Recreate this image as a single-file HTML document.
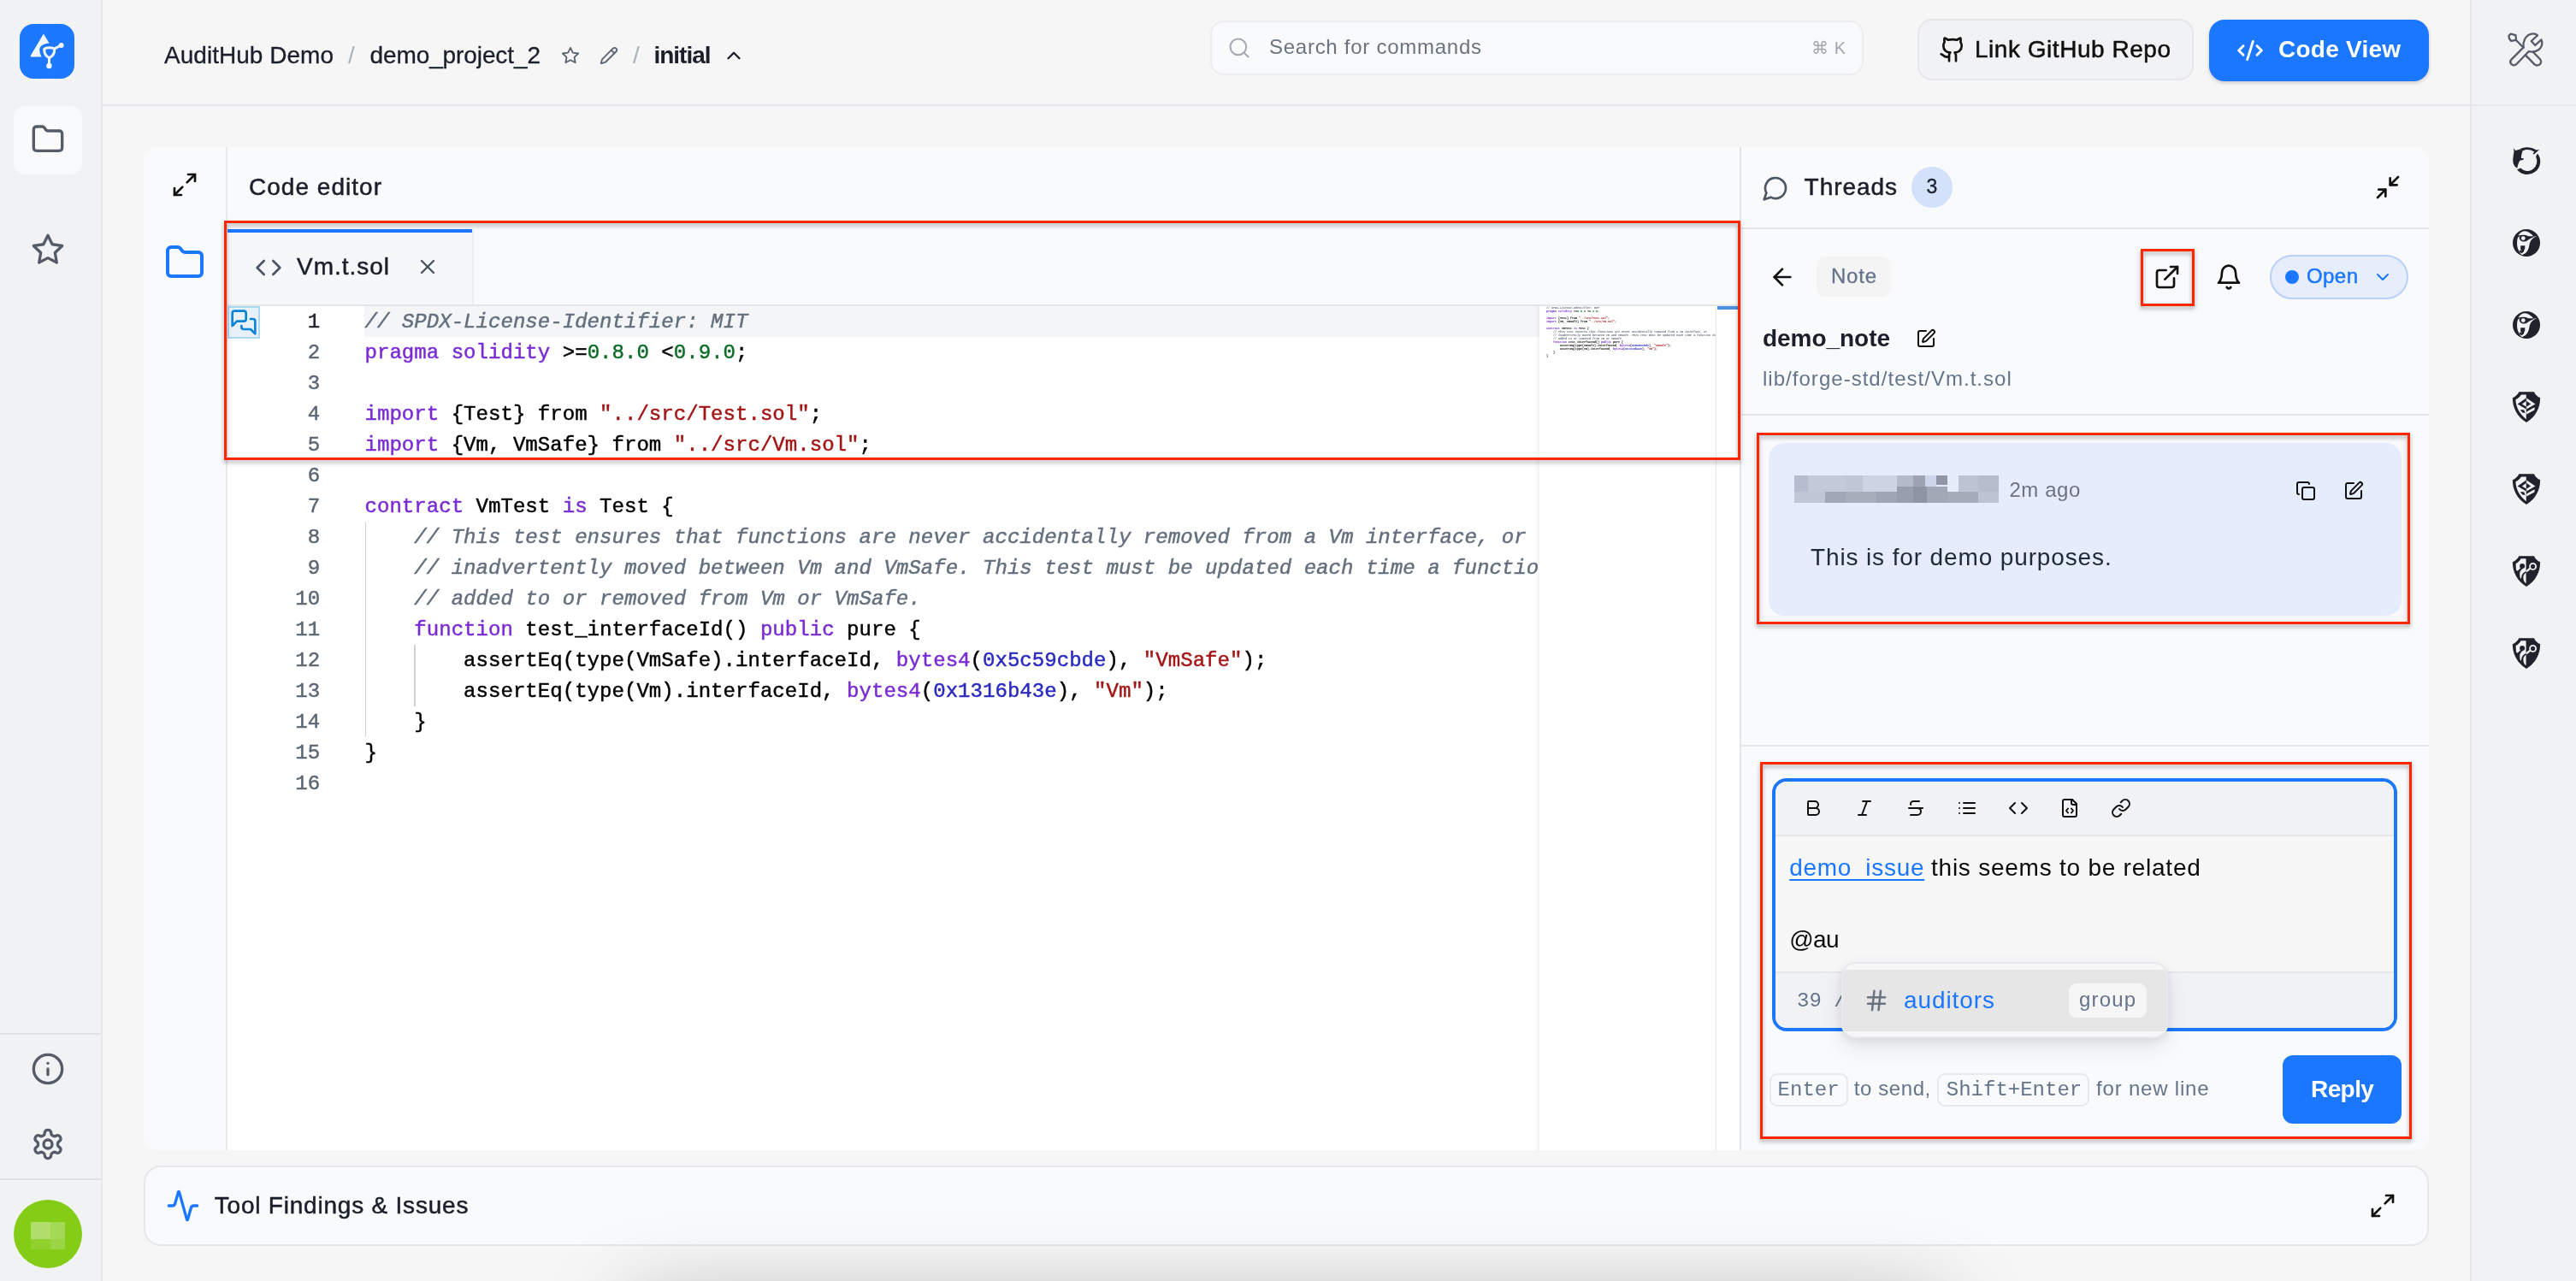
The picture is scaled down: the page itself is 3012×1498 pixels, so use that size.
<!DOCTYPE html><html><head><meta charset="utf-8"><title>AuditHub</title><style>html,body{margin:0;padding:0}body{width:3012px;height:1498px;position:relative;overflow:hidden;background:#f6f6f6;font-family:"Liberation Sans",sans-serif}svg{display:block;overflow:visible}</style></head><body><div style="position:absolute;left:0;top:0;width:3012px;height:1498px;overflow:hidden;will-change:transform"><div style="position:absolute;left:0px;top:0px;width:118px;height:1498px;background:#f1f2f4;"></div>
<div style="position:absolute;left:118px;top:0px;width:2px;height:1498px;background:#e6e7ec;"></div>
<div style="position:absolute;left:2890px;top:0px;width:122px;height:1498px;background:#f1f2f4;"></div>
<div style="position:absolute;left:2888px;top:0px;width:2px;height:1498px;background:#e6e7ec;"></div>
<div style="position:absolute;left:120px;top:122px;width:2892px;height:2px;background:#e6e7ec;"></div>
<div style="position:absolute;left:23px;top:28px;width:64px;height:64px;background:#1b78ff;border-radius:16px;"></div>
<svg style="position:absolute;left:20px;top:25px" width="70" height="70" viewBox="0 0 70 70"><path d="M30.9 14.6 L37.6 25.4 C31 25.6 26 29 26.2 33.5 C26.4 37 27.6 39.6 28.6 41.6 L16.4 41.6 Q15.2 41.2 15.8 40 Z" fill="#f1f5fd"/><path d="M31.6 32.6 C34 30.2 41.5 30.2 43.8 32.6 C43.6 37.5 41.5 41 37.6 42.6 C33.8 41 31.8 37.5 31.6 32.6 Z" fill="none" stroke="#f1f5fd" stroke-width="3" stroke-linejoin="round"/><path d="M44 31.8 L51.2 28 M37.5 43 L37.5 51.5" stroke="#f1f5fd" stroke-width="3" stroke-linecap="round"/><circle cx="51.6" cy="27.9" r="3" fill="#f1f5fd"/><circle cx="37.4" cy="52" r="3.2" fill="#f1f5fd"/></svg>
<div style="position:absolute;left:16px;top:124px;width:80px;height:80px;background:#f9fafb;border-radius:14px;"></div>
<svg style="position:absolute;left:36.00px;top:143.00px;" width="40" height="40" viewBox="0 0 24 24" fill="none" stroke="#555b67" stroke-width="2" stroke-linecap="round" stroke-linejoin="round"><path d="M20 20a2 2 0 0 0 2-2V8a2 2 0 0 0-2-2h-7.9a2 2 0 0 1-1.69-.9L9.6 3.9A2 2 0 0 0 7.93 3H4a2 2 0 0 0-2 2v13a2 2 0 0 0 2 2Z"/></svg>
<svg style="position:absolute;left:36.00px;top:271.50px;" width="40" height="40" viewBox="0 0 24 24" fill="none" stroke="#555b67" stroke-width="2" stroke-linecap="round" stroke-linejoin="round"><polygon points="12 2 15.09 8.26 22 9.27 17 14.14 18.18 21.02 12 17.77 5.82 21.02 7 14.14 2 9.27 8.91 8.26 12 2"/></svg>
<div style="position:absolute;left:0px;top:1208px;width:118px;height:2px;background:#dfe1e6;"></div>
<svg style="position:absolute;left:36.00px;top:1230.00px;" width="40" height="40" viewBox="0 0 24 24" fill="none" stroke="#555b67" stroke-width="2" stroke-linecap="round" stroke-linejoin="round"><circle cx="12" cy="12" r="10"/><path d="M12 16v-4"/><path d="M12 8h.01"/></svg>
<svg style="position:absolute;left:36.00px;top:1318.00px;" width="40" height="40" viewBox="0 0 24 24" fill="none" stroke="#555b67" stroke-width="2" stroke-linecap="round" stroke-linejoin="round"><path d="M12.22 2h-.44a2 2 0 0 0-2 2v.18a2 2 0 0 1-1 1.73l-.43.25a2 2 0 0 1-2 0l-.15-.08a2 2 0 0 0-2.73.73l-.22.38a2 2 0 0 0 .73 2.73l.15.1a2 2 0 0 1 1 1.72v.51a2 2 0 0 1-1 1.74l-.15.09a2 2 0 0 0-.73 2.73l.22.38a2 2 0 0 0 2.73.73l.15-.08a2 2 0 0 1 2 0l.43.25a2 2 0 0 1 1 1.73V20a2 2 0 0 0 2 2h.44a2 2 0 0 0 2-2v-.18a2 2 0 0 1 1-1.73l.43-.25a2 2 0 0 1 2 0l.15.08a2 2 0 0 0 2.73-.73l.22-.39a2 2 0 0 0-.73-2.73l-.15-.08a2 2 0 0 1-1-1.74v-.5a2 2 0 0 1 1-1.74l.15-.09a2 2 0 0 0 .73-2.73l-.22-.38a2 2 0 0 0-2.73-.73l-.15.08a2 2 0 0 1-2 0l-.43-.25a2 2 0 0 1-1-1.73V4a2 2 0 0 0-2-2z"/><circle cx="12" cy="12" r="3"/></svg>
<div style="position:absolute;left:0px;top:1378px;width:118px;height:2px;background:#dfe1e6;"></div>
<div style="position:absolute;left:16px;top:1403px;width:80px;height:80px;background:#84cc16;border-radius:50%;"></div>
<div style="position:absolute;left:36px;top:1429px;width:23px;height:20px;background:#b0de6c;"></div>
<div style="position:absolute;left:59px;top:1429px;width:17px;height:20px;background:#a3d955;"></div>
<div style="position:absolute;left:36px;top:1449px;width:23px;height:12px;background:#8fd02c;"></div>
<div style="position:absolute;left:59px;top:1449px;width:17px;height:12px;background:#9bd545;"></div>
<span id="t1" style="position:absolute;left:192px;top:50.90px;font:400 28px/1 'Liberation Sans', sans-serif;color:#1a1f2b;white-space:pre;letter-spacing:0.029px;-webkit-text-stroke:0.3px #1a1f2b;">AuditHub Demo</span>
<span id="t2" style="position:absolute;left:407px;top:50.90px;font:400 28px/1 'Liberation Sans', sans-serif;color:#a9b1be;white-space:pre;letter-spacing:0.000px;">/</span>
<span id="t3" style="position:absolute;left:432.5px;top:50.90px;font:400 28px/1 'Liberation Sans', sans-serif;color:#1a1f2b;white-space:pre;letter-spacing:-0.101px;-webkit-text-stroke:0.3px #1a1f2b;">demo_project_2</span>
<svg style="position:absolute;left:656.00px;top:53.50px;" width="22" height="22" viewBox="0 0 24 24" fill="none" stroke="#5b6472" stroke-width="2" stroke-linecap="round" stroke-linejoin="round"><polygon points="12 2 15.09 8.26 22 9.27 17 14.14 18.18 21.02 12 17.77 5.82 21.02 7 14.14 2 9.27 8.91 8.26 12 2"/></svg>
<svg style="position:absolute;left:701.00px;top:53.50px;" width="22" height="22" viewBox="0 0 24 24" fill="none" stroke="#5b6472" stroke-width="2" stroke-linecap="round" stroke-linejoin="round"><path d="M21.174 6.812a1 1 0 0 0-3.986-3.987L3.842 16.174a2 2 0 0 0-.5.83l-1.321 4.352a.5.5 0 0 0 .623.622l4.353-1.32a2 2 0 0 0 .83-.497z"/><path d="m15 5 4 4"/></svg>
<span id="t4" style="position:absolute;left:740px;top:50.90px;font:400 28px/1 'Liberation Sans', sans-serif;color:#a9b1be;white-space:pre;letter-spacing:0.000px;">/</span>
<span id="t5" style="position:absolute;left:764.5px;top:50.90px;font:700 28px/1 'Liberation Sans', sans-serif;color:#1a1f2b;white-space:pre;letter-spacing:-1.021px;">initial</span>
<svg style="position:absolute;left:844.70px;top:52.30px;" width="26" height="26" viewBox="0 0 24 24" fill="none" stroke="#1a1f2b" stroke-width="2.2" stroke-linecap="round" stroke-linejoin="round"><path d="m18 15-6-6-6 6"/></svg>
<div style="position:absolute;left:1415px;top:24px;width:764px;height:64px;box-sizing:border-box;background:#f9fafb;border:2px solid #ededf0;border-radius:16px;"></div>
<svg style="position:absolute;left:1434.60px;top:42.10px;" width="28" height="28" viewBox="0 0 24 24" fill="none" stroke="#a3a9b5" stroke-width="1.75" stroke-linecap="round" stroke-linejoin="round"><circle cx="11" cy="11" r="8"/><path d="m21 21-4.3-4.3"/></svg>
<span id="t6" style="position:absolute;left:1484px;top:43.48px;font:400 24px/1 'Liberation Sans', sans-serif;color:#6b7280;white-space:pre;letter-spacing:0.735px;">Search for commands</span>
<span id="t7" style="position:absolute;left:2118px;top:46.07px;font:400 20px/1 'Liberation Sans', sans-serif;color:#a0a6b1;white-space:pre;letter-spacing:0.547px;">⌘ K</span>
<div style="position:absolute;left:2242px;top:22px;width:323px;height:72px;box-sizing:border-box;background:#f1f2f4;border:2px solid #e6e7ea;border-radius:17px;"></div>
<svg style="position:absolute;left:2266.50px;top:42.00px;" width="32" height="32" viewBox="0 0 24 24" fill="none" stroke="#111" stroke-width="2" stroke-linecap="round" stroke-linejoin="round"><path d="M15 22v-4a4.8 4.8 0 0 0-1-3.5c3 0 6-2 6-5.5.08-1.25-.27-2.48-1-3.5.28-1.15.28-2.35 0-3.5 0 0-1 0-3 1.5-2.64-.5-5.36-.5-8 0C6 2 5 2 5 2c-.3 1.15-.3 2.35 0 3.5A5.403 5.403 0 0 0 4 9c0 3.5 3 5.5 6 5.5-.39.49-.68 1.05-.85 1.65-.17.6-.22 1.23-.15 1.85v4"/><path d="M9 18c-4.51 2-5-2-7-2"/></svg>
<span id="t8" style="position:absolute;left:2309px;top:44.10px;font:400 28px/1 'Liberation Sans', sans-serif;color:#111;white-space:pre;letter-spacing:0.532px;-webkit-text-stroke:0.5px #111;">Link GitHub Repo</span>
<div style="position:absolute;left:2583px;top:22.5px;width:257px;height:72px;background:#1b77ff;border-radius:18px;box-shadow:0 2px 4px rgba(0,0,0,.18);"></div>
<svg style="position:absolute;left:2615.00px;top:42.50px;" width="32" height="32" viewBox="0 0 24 24" fill="none" stroke="#fff" stroke-width="2.2" stroke-linecap="round" stroke-linejoin="round"><path d="m18 16 4-4-4-4"/><path d="m6 8-4 4 4 4"/><path d="m14.5 4-5 16"/></svg>
<span id="t9" style="position:absolute;left:2664px;top:44.10px;font:700 28px/1 'Liberation Sans', sans-serif;color:#fff;white-space:pre;letter-spacing:0.238px;">Code View</span>
<svg style="position:absolute;left:2920px;top:25px" width="70" height="70" viewBox="0 0 70 70" fill="none" stroke="#555b67" stroke-width="2.3" stroke-linecap="round" stroke-linejoin="round"><path d="M15.6 14.6 L21.4 16.2 L22 21.8 L16 22.8 L14 20.2 L13.4 17 Z"/><path d="M22 22 L30.6 30.6"/><path d="M30.6 30.4 C29.6 24 32.6 16.8 39 14.8 C42 14 45.2 14.6 47 16.4 L39.8 23 L44.3 28 L51.4 21.4 C53.4 25 52.4 30 48.6 33 C45.4 35.4 40.5 36 36.6 35.2 L22.2 50.2 C20.4 51.8 17.6 51.6 16.2 49.8 C14.8 48.2 15 46 16.4 44.6 Z"/><path d="M32.9 39.4 L43.6 50.4 C45.4 52 48.4 51.8 50 50 C51.6 48.2 51.4 45.6 49.8 44 L42.4 36.4"/></svg>
<div style="position:absolute;left:168px;top:172px;width:2672px;height:1173px;background:#f9fafb;border-radius:16px;"></div>
<div style="position:absolute;left:266px;top:358px;width:1768px;height:987px;background:#fff;"></div>
<div style="position:absolute;left:264px;top:172px;width:2px;height:1173px;background:#e8e9ed;"></div>
<div style="position:absolute;left:2034px;top:172px;width:2px;height:1173px;background:#e3e5e9;"></div>
<svg style="position:absolute;left:200.00px;top:200.00px;" width="32" height="32" viewBox="0 0 24 24" fill="none" stroke="#111" stroke-width="2" stroke-linecap="round" stroke-linejoin="round"><polyline points="15 3 21 3 21 9"/><polyline points="9 21 3 21 3 15"/><line x1="21" x2="14" y1="3" y2="10"/><line x1="3" x2="10" y1="21" y2="14"/></svg>
<span id="t10" style="position:absolute;left:291px;top:204.90px;font:400 28px/1 'Liberation Sans', sans-serif;color:#1a1f2b;white-space:pre;letter-spacing:1.023px;-webkit-text-stroke:0.5px #1a1f2b;">Code editor</span>
<svg style="position:absolute;left:192.00px;top:283.00px;" width="48" height="48" viewBox="0 0 24 24" fill="none" stroke="#1b77ff" stroke-width="2" stroke-linecap="round" stroke-linejoin="round"><path d="M20 20a2 2 0 0 0 2-2V8a2 2 0 0 0-2-2h-7.9a2 2 0 0 1-1.69-.9L9.6 3.9A2 2 0 0 0 7.93 3H4a2 2 0 0 0-2 2v13a2 2 0 0 0 2 2Z"/></svg>
<div style="position:absolute;left:266px;top:268px;width:286px;height:89px;background:#f6f7f8;"></div>
<div style="position:absolute;left:552px;top:268px;width:1.5px;height:89px;background:#eceef0;"></div>
<div style="position:absolute;left:266px;top:268px;width:286px;height:4px;background:#1b77ff;"></div>
<div style="position:absolute;left:266px;top:356px;width:1768px;height:2px;background:#e4e6ea;"></div>
<svg style="position:absolute;left:297.70px;top:296.50px;" width="32" height="32" viewBox="0 0 24 24" fill="none" stroke="#4b5563" stroke-width="2" stroke-linecap="round" stroke-linejoin="round"><polyline points="16 18 22 12 16 6"/><polyline points="8 6 2 12 8 18"/></svg>
<span id="t11" style="position:absolute;left:347px;top:298.00px;font:400 28px/1 'Liberation Sans', sans-serif;color:#1a1f2b;white-space:pre;letter-spacing:0.980px;-webkit-text-stroke:0.5px #1a1f2b;">Vm.t.sol</span>
<svg style="position:absolute;left:486.00px;top:298.00px;" width="28" height="28" viewBox="0 0 24 24" fill="none" stroke="#4b5563" stroke-width="2" stroke-linecap="round" stroke-linejoin="round"><path d="M18 6 6 18"/><path d="m6 6 12 12"/></svg>
<div style="position:absolute;left:426px;top:358px;width:1374px;height:36px;background:#f4f5f7;"></div>
<div style="position:absolute;left:266px;top:358px;width:38px;height:38px;box-sizing:border-box;background:#e8f0fa;border:2px solid #a9d9f2;"></div>
<svg style="position:absolute;left:268.50px;top:360.50px;" width="32" height="32" viewBox="0 0 24 24" fill="none" stroke="#0a84d6" stroke-width="2" stroke-linecap="round" stroke-linejoin="round"><path d="M14 9a2 2 0 0 1-2 2H6l-4 4V4a2 2 0 0 1 2-2h8a2 2 0 0 1 2 2z"/><path d="M18 9h2a2 2 0 0 1 2 2v11l-4-4h-6a2 2 0 0 1-2-2v-1"/></svg>
<div style="position:absolute;left:266px;top:358px;width:1534px;height:987px;overflow:hidden;font:400 24.08px/1 'Liberation Mono', monospace;white-space:pre;-webkit-text-stroke:0.45px;"><div style="position:absolute;left:160.5px;top:252px;width:1.5px;height:252px;background:#d3d3d3"></div><div style="position:absolute;left:218.3px;top:396px;width:1.5px;height:72px;background:#d3d3d3"></div><div style="position:absolute;right:1425.8px;top:7.24px;color:#1f2329;">1</div><div style="position:absolute;left:160.5px;top:7.24px;color:#000;"><span style="color:#646f7e;font-style:italic">// SPDX-License-Identifier: MIT</span></div><div style="position:absolute;right:1425.8px;top:43.24px;color:#5c6773;">2</div><div style="position:absolute;left:160.5px;top:43.24px;color:#000;"><span style="color:#7a2bd4">pragma</span> <span style="color:#7a2bd4">solidity</span> &gt;=<span style="color:#0d6c26">0.8.0</span> &lt;<span style="color:#0d6c26">0.9.0</span>;</div><div style="position:absolute;right:1425.8px;top:79.24px;color:#5c6773;">3</div><div style="position:absolute;left:160.5px;top:79.24px;color:#000;"></div><div style="position:absolute;right:1425.8px;top:115.24px;color:#5c6773;">4</div><div style="position:absolute;left:160.5px;top:115.24px;color:#000;"><span style="color:#7a2bd4">import</span> {Test} from <span style="color:#a31515">&quot;../src/Test.sol&quot;</span>;</div><div style="position:absolute;right:1425.8px;top:151.24px;color:#5c6773;">5</div><div style="position:absolute;left:160.5px;top:151.24px;color:#000;"><span style="color:#7a2bd4">import</span> {Vm, VmSafe} from <span style="color:#a31515">&quot;../src/Vm.sol&quot;</span>;</div><div style="position:absolute;right:1425.8px;top:187.24px;color:#5c6773;">6</div><div style="position:absolute;left:160.5px;top:187.24px;color:#000;"></div><div style="position:absolute;right:1425.8px;top:223.24px;color:#5c6773;">7</div><div style="position:absolute;left:160.5px;top:223.24px;color:#000;"><span style="color:#7a2bd4">contract</span> VmTest <span style="color:#7a2bd4">is</span> Test {</div><div style="position:absolute;right:1425.8px;top:259.24px;color:#5c6773;">8</div><div style="position:absolute;left:160.5px;top:259.24px;color:#000;">    <span style="color:#646f7e;font-style:italic">// This test ensures that functions are never accidentally removed from a Vm interface, or</span></div><div style="position:absolute;right:1425.8px;top:295.24px;color:#5c6773;">9</div><div style="position:absolute;left:160.5px;top:295.24px;color:#000;">    <span style="color:#646f7e;font-style:italic">// inadvertently moved between Vm and VmSafe. This test must be updated each time a function is</span></div><div style="position:absolute;right:1425.8px;top:331.24px;color:#5c6773;">10</div><div style="position:absolute;left:160.5px;top:331.24px;color:#000;">    <span style="color:#646f7e;font-style:italic">// added to or removed from Vm or VmSafe.</span></div><div style="position:absolute;right:1425.8px;top:367.24px;color:#5c6773;">11</div><div style="position:absolute;left:160.5px;top:367.24px;color:#000;">    <span style="color:#7a2bd4">function</span> test_interfaceId() <span style="color:#7a2bd4">public</span> pure {</div><div style="position:absolute;right:1425.8px;top:403.24px;color:#5c6773;">12</div><div style="position:absolute;left:160.5px;top:403.24px;color:#000;">        assertEq(type(VmSafe).interfaceId, <span style="color:#7a2bd4">bytes4</span>(<span style="color:#2a2abf">0x5c59cbde</span>), <span style="color:#a31515">&quot;VmSafe&quot;</span>);</div><div style="position:absolute;right:1425.8px;top:439.24px;color:#5c6773;">13</div><div style="position:absolute;left:160.5px;top:439.24px;color:#000;">        assertEq(type(Vm).interfaceId, <span style="color:#7a2bd4">bytes4</span>(<span style="color:#2a2abf">0x1316b43e</span>), <span style="color:#a31515">&quot;Vm&quot;</span>);</div><div style="position:absolute;right:1425.8px;top:475.24px;color:#5c6773;">14</div><div style="position:absolute;left:160.5px;top:475.24px;color:#000;">    }</div><div style="position:absolute;right:1425.8px;top:511.24px;color:#5c6773;">15</div><div style="position:absolute;left:160.5px;top:511.24px;color:#000;">}</div><div style="position:absolute;right:1425.8px;top:547.24px;color:#5c6773;">16</div><div style="position:absolute;left:160.5px;top:547.24px;color:#000;"></div></div>
<div style="position:absolute;left:1794px;top:358px;width:6px;height:987px;background:linear-gradient(90deg,rgba(0,0,0,0),rgba(0,0,0,.045));"></div>
<div style="position:absolute;left:1808px;top:357.5px;width:198.5px;height:980px;overflow:hidden;"><div style="transform-origin:0 0;transform:scale(0.1384);width:1600px;font:700 24.08px/28.9px 'Liberation Mono', monospace;white-space:pre;"><div style="height:28.9px;line-height:28.9px;color:#000;"><span style="color:#646f7e;font-style:italic">// SPDX-License-Identifier: MIT</span></div><div style="height:28.9px;line-height:28.9px;color:#000;"><span style="color:#7a2bd4">pragma</span> <span style="color:#7a2bd4">solidity</span> &gt;=<span style="color:#0d6c26">0.8.0</span> &lt;<span style="color:#0d6c26">0.9.0</span>;</div><div style="height:28.9px;line-height:28.9px;color:#000;"> </div><div style="height:28.9px;line-height:28.9px;color:#000;"><span style="color:#7a2bd4">import</span> {Test} from <span style="color:#a31515">&quot;../src/Test.sol&quot;</span>;</div><div style="height:28.9px;line-height:28.9px;color:#000;"><span style="color:#7a2bd4">import</span> {Vm, VmSafe} from <span style="color:#a31515">&quot;../src/Vm.sol&quot;</span>;</div><div style="height:28.9px;line-height:28.9px;color:#000;"> </div><div style="height:28.9px;line-height:28.9px;color:#000;"><span style="color:#7a2bd4">contract</span> VmTest <span style="color:#7a2bd4">is</span> Test {</div><div style="height:28.9px;line-height:28.9px;color:#000;">    <span style="color:#646f7e;font-style:italic">// This test ensures that functions are never accidentally removed from a Vm interface, or</span></div><div style="height:28.9px;line-height:28.9px;color:#000;">    <span style="color:#646f7e;font-style:italic">// inadvertently moved between Vm and VmSafe. This test must be updated each time a function is</span></div><div style="height:28.9px;line-height:28.9px;color:#000;">    <span style="color:#646f7e;font-style:italic">// added to or removed from Vm or VmSafe.</span></div><div style="height:28.9px;line-height:28.9px;color:#000;">    <span style="color:#7a2bd4">function</span> test_interfaceId() <span style="color:#7a2bd4">public</span> pure {</div><div style="height:28.9px;line-height:28.9px;color:#000;">        assertEq(type(VmSafe).interfaceId, <span style="color:#7a2bd4">bytes4</span>(<span style="color:#2a2abf">0x5c59cbde</span>), <span style="color:#a31515">&quot;VmSafe&quot;</span>);</div><div style="height:28.9px;line-height:28.9px;color:#000;">        assertEq(type(Vm).interfaceId, <span style="color:#7a2bd4">bytes4</span>(<span style="color:#2a2abf">0x1316b43e</span>), <span style="color:#a31515">&quot;Vm&quot;</span>);</div><div style="height:28.9px;line-height:28.9px;color:#000;">    }</div><div style="height:28.9px;line-height:28.9px;color:#000;">}</div><div style="height:28.9px;line-height:28.9px;color:#000;"> </div></div></div>
<div style="position:absolute;left:2006.3px;top:358px;width:1px;height:987px;background:#e6e6e8;"></div>
<div style="position:absolute;left:2007.5px;top:358px;width:24.5px;height:4px;background:#4c8fe0;"></div>
<svg style="position:absolute;left:2059.50px;top:203.50px;" width="32" height="32" viewBox="0 0 24 24" fill="none" stroke="#4b5563" stroke-width="2" stroke-linecap="round" stroke-linejoin="round"><path d="M7.9 20A9 9 0 1 0 4 16.1L2 22Z"/></svg>
<span id="t12" style="position:absolute;left:2109.6px;top:205.30px;font:400 28px/1 'Liberation Sans', sans-serif;color:#1a1f2b;white-space:pre;letter-spacing:0.930px;-webkit-text-stroke:0.5px #1a1f2b;">Threads</span>
<div style="position:absolute;left:2235px;top:195px;width:48px;height:48px;background:#d3e1fb;border-radius:50%;"></div>
<span id="t13" style="position:absolute;left:2252.5px;top:206.73px;font:400 23px/1 'Liberation Sans', sans-serif;color:#1a1f2b;white-space:pre;letter-spacing:0.000px;-webkit-text-stroke:0.3px #1a1f2b;">3</span>
<svg style="position:absolute;left:2776.00px;top:203.00px;" width="32" height="32" viewBox="0 0 24 24" fill="none" stroke="#111" stroke-width="2" stroke-linecap="round" stroke-linejoin="round"><polyline points="4 14 10 14 10 20"/><polyline points="20 10 14 10 14 4"/><line x1="14" x2="21" y1="10" y2="3"/><line x1="3" x2="10" y1="21" y2="14"/></svg>
<div style="position:absolute;left:2036px;top:266px;width:804px;height:2px;background:#e6e7eb;"></div>
<svg style="position:absolute;left:2068.00px;top:308.00px;" width="32" height="32" viewBox="0 0 24 24" fill="none" stroke="#111" stroke-width="2" stroke-linecap="round" stroke-linejoin="round"><path d="m12 19-7-7 7-7"/><path d="M19 12H5"/></svg>
<div style="position:absolute;left:2124px;top:300px;width:87px;height:47px;background:#f4f4f5;border-radius:10px;"></div>
<span id="t14" style="position:absolute;left:2140.9px;top:311.08px;font:400 24px/1 'Liberation Sans', sans-serif;color:#64748b;white-space:pre;letter-spacing:0.799px;-webkit-text-stroke:0.3px #64748b;">Note</span>
<svg style="position:absolute;left:2518.00px;top:308.00px;" width="32" height="32" viewBox="0 0 24 24" fill="none" stroke="#111" stroke-width="2" stroke-linecap="round" stroke-linejoin="round"><path d="M15 3h6v6"/><path d="M10 14 21 3"/><path d="M18 13v6a2 2 0 0 1-2 2H5a2 2 0 0 1-2-2V8a2 2 0 0 1 2-2h6"/></svg>
<svg style="position:absolute;left:2590.00px;top:308.00px;" width="32" height="32" viewBox="0 0 24 24" fill="none" stroke="#111" stroke-width="2" stroke-linecap="round" stroke-linejoin="round"><path d="M6 8a6 6 0 0 1 12 0c0 7 3 9 3 9H3s3-2 3-9"/><path d="M10.3 21a1.94 1.94 0 0 0 3.4 0"/></svg>
<div style="position:absolute;left:2654px;top:298px;width:162px;height:52px;box-sizing:border-box;background:#e6eefc;border:2px solid #b9d0fb;border-radius:26px;"></div>
<div style="position:absolute;left:2672px;top:316px;width:16px;height:16px;background:#1b77ff;border-radius:50%;"></div>
<span id="t15" style="position:absolute;left:2697px;top:311.08px;font:400 24px/1 'Liberation Sans', sans-serif;color:#1b77ff;white-space:pre;letter-spacing:0.427px;-webkit-text-stroke:0.5px #1b77ff;">Open</span>
<svg style="position:absolute;left:2774.00px;top:312.00px;" width="24" height="24" viewBox="0 0 24 24" fill="none" stroke="#1b77ff" stroke-width="2" stroke-linecap="round" stroke-linejoin="round"><path d="m6 9 6 6 6-6"/></svg>
<span id="t16" style="position:absolute;left:2061px;top:381.80px;font:700 28px/1 'Liberation Sans', sans-serif;color:#1a1f2b;white-space:pre;letter-spacing:-0.045px;">demo_note</span>
<svg style="position:absolute;left:2239.50px;top:383.60px;" width="24" height="24" viewBox="0 0 24 24" fill="none" stroke="#111" stroke-width="2" stroke-linecap="round" stroke-linejoin="round"><path d="M12 3H5a2 2 0 0 0-2 2v14a2 2 0 0 0 2 2h14a2 2 0 0 0 2-2v-7"/><path d="M18.375 2.625a1 1 0 0 1 3 3l-9.013 9.014a2 2 0 0 1-.853.505l-2.873.84a.5.5 0 0 1-.62-.62l.84-2.873a2 2 0 0 1 .506-.852z"/></svg>
<span id="t17" style="position:absolute;left:2061px;top:431.48px;font:400 24px/1 'Liberation Sans', sans-serif;color:#64748b;white-space:pre;letter-spacing:1.027px;">lib/forge-std/test/Vm.t.sol</span>
<div style="position:absolute;left:2036px;top:484px;width:804px;height:2px;background:#e6e7eb;"></div>
<div style="position:absolute;left:2068px;top:518px;width:739.6px;height:201.5px;background:#e5edfc;border-radius:18px;"></div>
<div style="position:absolute;left:2098px;top:556px;width:16px;height:19px;background:#b4bccd;"></div>
<div style="position:absolute;left:2114px;top:556px;width:44px;height:19px;background:#c3c9d9;"></div>
<div style="position:absolute;left:2158px;top:556px;width:20px;height:19px;background:#bfc6d6;"></div>
<div style="position:absolute;left:2178px;top:556px;width:40px;height:19px;background:#ccd3e2;"></div>
<div style="position:absolute;left:2218px;top:556px;width:19px;height:13px;background:#b3bac9;"></div>
<div style="position:absolute;left:2237px;top:556px;width:14px;height:13px;background:#9ca3b2;"></div>
<div style="position:absolute;left:2251px;top:556px;width:13px;height:13px;background:#cdd6e8;"></div>
<div style="position:absolute;left:2264px;top:556px;width:13px;height:11px;background:#8f96a5;"></div>
<div style="position:absolute;left:2277px;top:556px;width:13px;height:19px;background:#e5edfb;"></div>
<div style="position:absolute;left:2290px;top:556px;width:23px;height:19px;background:#bdc3d2;"></div>
<div style="position:absolute;left:2313px;top:556px;width:24px;height:19px;background:#b5bccb;"></div>
<div style="position:absolute;left:2098px;top:575px;width:36px;height:13px;background:#c0c6d6;"></div>
<div style="position:absolute;left:2134px;top:575px;width:24px;height:13px;background:#a0a7b6;"></div>
<div style="position:absolute;left:2158px;top:575px;width:36px;height:13px;background:#a6adbb;"></div>
<div style="position:absolute;left:2194px;top:575px;width:24px;height:13px;background:#9ea5b4;"></div>
<div style="position:absolute;left:2218px;top:569px;width:19px;height:19px;background:#979eac;"></div>
<div style="position:absolute;left:2237px;top:569px;width:16px;height:19px;background:#8d94a3;"></div>
<div style="position:absolute;left:2253px;top:569px;width:24px;height:19px;background:#a1a8b6;"></div>
<div style="position:absolute;left:2277px;top:575px;width:36px;height:13px;background:#a4abb9;"></div>
<div style="position:absolute;left:2313px;top:575px;width:24px;height:13px;background:#bcc3d3;"></div>
<span id="t18" style="position:absolute;left:2349.4px;top:561.28px;font:400 24px/1 'Liberation Sans', sans-serif;color:#6b7280;white-space:pre;letter-spacing:0.588px;">2m ago</span>
<svg style="position:absolute;left:2683.70px;top:561.80px;" width="24" height="24" viewBox="0 0 24 24" fill="none" stroke="#111" stroke-width="2" stroke-linecap="round" stroke-linejoin="round"><rect width="14" height="14" x="8" y="8" rx="2" ry="2"/><path d="M4 16c-1.1 0-2-.9-2-2V4c0-1.1.9-2 2-2h10c1.1 0 2 .9 2 2"/></svg>
<svg style="position:absolute;left:2739.50px;top:561.50px;" width="24" height="24" viewBox="0 0 24 24" fill="none" stroke="#111" stroke-width="2" stroke-linecap="round" stroke-linejoin="round"><path d="M12 3H5a2 2 0 0 0-2 2v14a2 2 0 0 0 2 2h14a2 2 0 0 0 2-2v-7"/><path d="M18.375 2.625a1 1 0 0 1 3 3l-9.013 9.014a2 2 0 0 1-.853.505l-2.873.84a.5.5 0 0 1-.62-.62l.84-2.873a2 2 0 0 1 .506-.852z"/></svg>
<span id="t19" style="position:absolute;left:2117px;top:637.80px;font:400 28px/1 'Liberation Sans', sans-serif;color:#1f2937;white-space:pre;letter-spacing:0.871px;">This is for demo purposes.</span>
<div style="position:absolute;left:2036px;top:871px;width:804px;height:2px;background:#e6e7eb;"></div>
<div style="position:absolute;left:2071.8px;top:910px;width:731.7px;height:296px;box-sizing:border-box;background:#f7f7f8;border:4px solid #1b77ff;border-radius:17px;overflow:hidden;"><div style="position:absolute;left:0;top:0;width:100%;height:62px;background:#f1f2f4;border-bottom:2px solid #e6e7ea"></div><div style="position:absolute;left:0;top:222px;width:100%;height:70px;background:#f1f2f4;border-top:2px solid #e6e7ea"></div></div>
<svg style="position:absolute;left:2107.80px;top:932.80px;" width="24" height="24" viewBox="0 0 24 24" fill="none" stroke="#111" stroke-width="2" stroke-linecap="round" stroke-linejoin="round"><path d="M6 12h9a4 4 0 0 1 0 8H7a1 1 0 0 1-1-1V5a1 1 0 0 1 1-1h7a4 4 0 0 1 0 8"/></svg>
<svg style="position:absolute;left:2167.80px;top:932.80px;" width="24" height="24" viewBox="0 0 24 24" fill="none" stroke="#111" stroke-width="2" stroke-linecap="round" stroke-linejoin="round"><line x1="19" x2="10" y1="4" y2="4"/><line x1="14" x2="5" y1="20" y2="20"/><line x1="15" x2="9" y1="4" y2="20"/></svg>
<svg style="position:absolute;left:2227.80px;top:932.80px;" width="24" height="24" viewBox="0 0 24 24" fill="none" stroke="#111" stroke-width="2" stroke-linecap="round" stroke-linejoin="round"><path d="M16 4H9a3 3 0 0 0-2.83 4"/><path d="M14 12a4 4 0 0 1 0 8H6"/><line x1="4" x2="20" y1="12" y2="12"/></svg>
<svg style="position:absolute;left:2287.80px;top:932.80px;" width="24" height="24" viewBox="0 0 24 24" fill="none" stroke="#111" stroke-width="2" stroke-linecap="round" stroke-linejoin="round"><path d="M3 12h.01"/><path d="M3 18h.01"/><path d="M3 6h.01"/><path d="M8 12h13"/><path d="M8 18h13"/><path d="M8 6h13"/></svg>
<svg style="position:absolute;left:2347.80px;top:932.80px;" width="24" height="24" viewBox="0 0 24 24" fill="none" stroke="#111" stroke-width="2" stroke-linecap="round" stroke-linejoin="round"><polyline points="16 18 22 12 16 6"/><polyline points="8 6 2 12 8 18"/></svg>
<svg style="position:absolute;left:2407.80px;top:932.80px;" width="24" height="24" viewBox="0 0 24 24" fill="none" stroke="#111" stroke-width="2" stroke-linecap="round" stroke-linejoin="round"><path d="M10 12.5 8 15l2 2.5"/><path d="m14 12.5 2 2.5-2 2.5"/><path d="M14 2v4a2 2 0 0 0 2 2h4"/><path d="M15 2H6a2 2 0 0 0-2 2v16a2 2 0 0 0 2 2h12a2 2 0 0 0 2-2V7z"/></svg>
<svg style="position:absolute;left:2467.80px;top:932.80px;" width="24" height="24" viewBox="0 0 24 24" fill="none" stroke="#111" stroke-width="2" stroke-linecap="round" stroke-linejoin="round"><path d="M10 13a5 5 0 0 0 7.54.54l3-3a5 5 0 0 0-7.07-7.07l-1.72 1.71"/><path d="M14 11a5 5 0 0 0-7.54-.54l-3 3a5 5 0 0 0 7.07 7.07l1.71-1.71"/></svg>
<span id="t20" style="position:absolute;left:2092.3px;top:1000.90px;font:400 28px/1 'Liberation Sans', sans-serif;color:#1b77ff;white-space:pre;letter-spacing:0.691px;text-decoration:underline;text-decoration-thickness:2px;text-underline-offset:4px;">demo_issue</span>
<span id="t21" style="position:absolute;left:2258px;top:1000.90px;font:400 28px/1 'Liberation Sans', sans-serif;color:#0a0a0a;white-space:pre;letter-spacing:0.762px;">this seems to be related</span>
<span id="t22" style="position:absolute;left:2092.3px;top:1084.90px;font:400 28px/1 'Liberation Sans', sans-serif;color:#0a0a0a;white-space:pre;letter-spacing:-0.689px;">@au</span>
<span id="t23" style="position:absolute;left:2101px;top:1159.40px;font:400 24px/1 'Liberation Mono', monospace;color:#64748b;white-space:pre;letter-spacing:0.000px;">39 /</span>
<div style="position:absolute;left:2152.8px;top:1124.8px;width:382.4px;height:89.7px;box-sizing:border-box;background:#f7f7f8;border:2px solid #e8e9ee;border-radius:16px;box-shadow:0 10px 24px rgba(0,0,0,.10),0 3px 8px rgba(0,0,0,.06);overflow:hidden;"><div style="position:absolute;left:0;top:7.2px;width:100%;height:71.8px;background:#e6e6e6"></div></div>
<svg style="position:absolute;left:2178.80px;top:1154.80px;" width="30" height="30" viewBox="0 0 24 24" fill="none" stroke="#6b7280" stroke-width="2" stroke-linecap="round" stroke-linejoin="round"><line x1="4" x2="20" y1="9" y2="9"/><line x1="4" x2="20" y1="15" y2="15"/><line x1="10" x2="8" y1="3" y2="21"/><line x1="16" x2="14" y1="3" y2="21"/></svg>
<span id="t24" style="position:absolute;left:2225.9px;top:1155.70px;font:400 28px/1 'Liberation Sans', sans-serif;color:#1b77ff;white-space:pre;letter-spacing:0.925px;">auditors</span>
<div style="position:absolute;left:2419px;top:1150px;width:91px;height:40px;background:#f6f6f7;border-radius:9px;"></div>
<span id="t25" style="position:absolute;left:2431px;top:1157.48px;font:400 24px/1 'Liberation Sans', sans-serif;color:#64748b;white-space:pre;letter-spacing:1.152px;">group</span>
<div style="position:absolute;left:2068.5px;top:1254.5px;width:92px;height:39px;box-sizing:border-box;background:#f9fafb;border:2px solid #e8e9ee;border-radius:9px;"></div>
<span id="t26" style="position:absolute;left:2078.6px;top:1263.10px;font:400 24px/1 'Liberation Mono', monospace;color:#64748b;white-space:pre;letter-spacing:0.000px;">Enter</span>
<span id="t27" style="position:absolute;left:2167.7px;top:1261.18px;font:400 24px/1 'Liberation Sans', sans-serif;color:#64748b;white-space:pre;letter-spacing:0.599px;">to send,</span>
<div style="position:absolute;left:2265.3px;top:1254.5px;width:178px;height:39px;box-sizing:border-box;background:#f9fafb;border:2px solid #e8e9ee;border-radius:9px;"></div>
<span id="t28" style="position:absolute;left:2275.8px;top:1263.10px;font:400 24px/1 'Liberation Mono', monospace;color:#64748b;white-space:pre;letter-spacing:0.000px;">Shift+Enter</span>
<span id="t29" style="position:absolute;left:2451px;top:1261.18px;font:400 24px/1 'Liberation Sans', sans-serif;color:#64748b;white-space:pre;letter-spacing:0.806px;">for new line</span>
<div style="position:absolute;left:2669px;top:1234px;width:139px;height:80px;background:#1b77ff;border-radius:12px;"></div>
<span id="t30" style="position:absolute;left:2702px;top:1260.20px;font:700 28px/1 'Liberation Sans', sans-serif;color:#fff;white-space:pre;letter-spacing:-0.587px;">Reply</span>
<svg style="position:absolute;left:2924px;top:160px" width="60" height="60" viewBox="0 0 60 60"><path d="M42.98 19.44 A15.2 15.2 0 0 1 19.02 38.16 L23.36 36.44 A11 11.6 0 0 0 41.05 23.00 Z" fill="#20232b"/><path d="M22 14.8 C26 11.6 35 11.2 41.6 15.6 L45.2 15 L41.4 18.3 L38.7 20.8 L37.9 19.2 L39.4 17.6 C34 14.2 28.5 14.6 25.6 16.6 Z" fill="#20232b"/><path d="M15 13.3 L17.2 15.9 L22 14.8 L25.6 16.6 C24.6 19.2 24 22 23.9 24.8 L27 25.6 L26.2 27 L22.8 27.6 L21.2 29.8 L20 33.2 L19.2 36.8 L16.4 34.4 L14.6 31 L14.2 26.5 L14.9 21 L15.5 17 Z" fill="#20232b"/></svg>
<svg style="position:absolute;left:2924px;top:256px" width="60" height="60" viewBox="0 0 60 60"><circle cx="30" cy="28" r="16" fill="#20232b"/><path d="M20.3 19.6 C22.5 16 25.5 14.3 28.2 14.3 C31.8 14.3 35.2 17 37.8 19.8 C35.2 20.9 33 20.6 31 19.8 C28.5 18.6 24 18.6 20.3 19.6 Z" fill="#f1f2f4"/><path d="M20 21.4 C24 19.5 30 20 33 21 L42.6 20.2 C38.5 21.5 36 23.5 34.4 27 C33.2 30 33.4 33.5 31.6 36.8 C30 39.6 27.6 41.4 24.6 42.2 C22 39.5 20 36 19.3 32 C18.8 28.5 19 24.5 20 21.4 Z" fill="#f1f2f4"/><path d="M21.6 21.2 C24.5 18.8 29.5 18.8 32.2 20.6 L40.5 20.7 C36.5 21.6 33.4 23.4 30.8 25.4 C28 27.2 24.4 26.8 22.6 24.4 C22 23.4 21.6 22.3 21.6 21.2 Z" fill="#20232b"/><circle cx="26.3" cy="22.6" r="2.4" fill="#f1f2f4"/><path d="M23.2 31.2 L28.4 31.2 L28.2 34.6 C27.8 36.6 26.5 37.7 25 38.1 C23.9 37.3 23.2 35.9 23.2 34.6 Z" fill="#20232b"/><path d="M21.6 36.2 L24.6 37.6 L27.4 36.6 L26.8 38.6 L24.2 40.2 L22.4 39 Z" fill="#20232b"/></svg>
<svg style="position:absolute;left:2924px;top:352px" width="60" height="60" viewBox="0 0 60 60"><circle cx="30" cy="28" r="16" fill="#20232b"/><path d="M20.3 19.6 C22.5 16 25.5 14.3 28.2 14.3 C31.8 14.3 35.2 17 37.8 19.8 C35.2 20.9 33 20.6 31 19.8 C28.5 18.6 24 18.6 20.3 19.6 Z" fill="#f1f2f4"/><path d="M20 21.4 C24 19.5 30 20 33 21 L42.6 20.2 C38.5 21.5 36 23.5 34.4 27 C33.2 30 33.4 33.5 31.6 36.8 C30 39.6 27.6 41.4 24.6 42.2 C22 39.5 20 36 19.3 32 C18.8 28.5 19 24.5 20 21.4 Z" fill="#f1f2f4"/><path d="M21.6 21.2 C24.5 18.8 29.5 18.8 32.2 20.6 L40.5 20.7 C36.5 21.6 33.4 23.4 30.8 25.4 C28 27.2 24.4 26.8 22.6 24.4 C22 23.4 21.6 22.3 21.6 21.2 Z" fill="#20232b"/><circle cx="26.3" cy="22.6" r="2.4" fill="#f1f2f4"/><path d="M23.2 31.2 L28.4 31.2 L28.2 34.6 C27.8 36.6 26.5 37.7 25 38.1 C23.9 37.3 23.2 35.9 23.2 34.6 Z" fill="#20232b"/><path d="M21.6 36.2 L24.6 37.6 L27.4 36.6 L26.8 38.6 L24.2 40.2 L22.4 39 Z" fill="#20232b"/></svg>
<svg style="position:absolute;left:2924px;top:446px" width="60" height="60" viewBox="0 0 60 60"><path d="M21.3 12.2 H39 C40.2 15.3 42.6 17.6 46.1 19.2 C46.3 30 41 41.5 30 47.9 C19 41.5 13.7 30 13.9 19.2 C17.4 17.6 19.8 15.3 21.3 12.2 Z" fill="#20232b"/><path d="M24 15.4 H29.8 V44.2 C22.5 38.6 17.8 30.5 17.4 21.2 C20.4 19.8 22.5 18 24 15.4 Z" fill="#f1f2f4"/><path d="M29.8 19.6 L19.6 26.4 L29.8 32.4 L29.8 29.4 L24.8 26.4 L29.8 23 Z" fill="#20232b"/><path d="M30.2 19.6 L40.4 26.4 L30.2 32.4 L30.2 29.4 L35.2 26.4 L30.2 23 Z" fill="#f1f2f4"/><path d="M30.2 35.4 L39.6 30.2 L39.4 33.4 L30.2 38.6 Z" fill="#f1f2f4"/><path d="M22.6 33.3 L27.2 33.3 L28.6 37 L25.4 36.4 Z" fill="#20232b"/></svg>
<svg style="position:absolute;left:2924px;top:542px" width="60" height="60" viewBox="0 0 60 60"><path d="M21.3 12.2 H39 C40.2 15.3 42.6 17.6 46.1 19.2 C46.3 30 41 41.5 30 47.9 C19 41.5 13.7 30 13.9 19.2 C17.4 17.6 19.8 15.3 21.3 12.2 Z" fill="#20232b"/><path d="M24 15.4 H29.8 V44.2 C22.5 38.6 17.8 30.5 17.4 21.2 C20.4 19.8 22.5 18 24 15.4 Z" fill="#f1f2f4"/><path d="M29.8 19.6 L19.6 26.4 L29.8 32.4 L29.8 29.4 L24.8 26.4 L29.8 23 Z" fill="#20232b"/><path d="M30.2 19.6 L40.4 26.4 L30.2 32.4 L30.2 29.4 L35.2 26.4 L30.2 23 Z" fill="#f1f2f4"/><path d="M30.2 35.4 L39.6 30.2 L39.4 33.4 L30.2 38.6 Z" fill="#f1f2f4"/><path d="M22.6 33.3 L27.2 33.3 L28.6 37 L25.4 36.4 Z" fill="#20232b"/></svg>
<svg style="position:absolute;left:2924px;top:638px" width="60" height="60" viewBox="0 0 60 60"><path d="M21.3 12.2 H39 C40.2 15.3 42.6 17.6 46.1 19.2 C46.3 30 41 41.5 30 47.9 C19 41.5 13.7 30 13.9 19.2 C17.4 17.6 19.8 15.3 21.3 12.2 Z" fill="#20232b"/><path d="M23.6 15.2 H29.6 V44.2 C27.8 43 26.6 41.6 26.4 38 C26.2 35 27.4 33 29.6 31.5 L29.6 30 C26.5 31.2 24.3 33.6 24.1 37.5 L23.2 39 C22.4 37 22 34 22.3 31.5 C22.8 29.5 25 27.5 26.4 26.6 L24.4 25 L19.6 29.8 L18 28.5 L17.6 21 C20.4 19.6 22.3 17.8 23.6 15.2 Z" fill="#f1f2f4"/><circle cx="25.1" cy="24.1" r="3" fill="#20232b"/><circle cx="37.6" cy="24.4" r="3.5" fill="none" stroke="#f1f2f4" stroke-width="1.9"/><path d="M34.4 26.6 L30 30.4" stroke="#f1f2f4" stroke-width="2.2"/></svg>
<svg style="position:absolute;left:2924px;top:734px" width="60" height="60" viewBox="0 0 60 60"><path d="M21.3 12.2 H39 C40.2 15.3 42.6 17.6 46.1 19.2 C46.3 30 41 41.5 30 47.9 C19 41.5 13.7 30 13.9 19.2 C17.4 17.6 19.8 15.3 21.3 12.2 Z" fill="#20232b"/><path d="M23.6 15.2 H29.6 V44.2 C27.8 43 26.6 41.6 26.4 38 C26.2 35 27.4 33 29.6 31.5 L29.6 30 C26.5 31.2 24.3 33.6 24.1 37.5 L23.2 39 C22.4 37 22 34 22.3 31.5 C22.8 29.5 25 27.5 26.4 26.6 L24.4 25 L19.6 29.8 L18 28.5 L17.6 21 C20.4 19.6 22.3 17.8 23.6 15.2 Z" fill="#f1f2f4"/><circle cx="25.1" cy="24.1" r="3" fill="#20232b"/><circle cx="37.6" cy="24.4" r="3.5" fill="none" stroke="#f1f2f4" stroke-width="1.9"/><path d="M34.4 26.6 L30 30.4" stroke="#f1f2f4" stroke-width="2.2"/></svg>
<div style="position:absolute;left:168px;top:1363px;width:2672px;height:94px;box-sizing:border-box;background:#f9fafb;border:2px solid #e6e7eb;border-radius:20px;"></div>
<svg style="position:absolute;left:194.00px;top:1390.00px;" width="40" height="40" viewBox="0 0 24 24" fill="none" stroke="#1b77ff" stroke-width="2" stroke-linecap="round" stroke-linejoin="round"><path d="M22 12h-2.48a2 2 0 0 0-1.93 1.46l-2.35 8.36a.25.25 0 0 1-.48 0L9.24 2.18a.25.25 0 0 0-.48 0l-2.35 8.36A2 2 0 0 1 4.49 12H2"/></svg>
<span id="t31" style="position:absolute;left:250.8px;top:1396.30px;font:400 28px/1 'Liberation Sans', sans-serif;color:#1a1f2b;white-space:pre;letter-spacing:0.784px;-webkit-text-stroke:0.5px #1a1f2b;">Tool Findings &amp; Issues</span>
<svg style="position:absolute;left:2770.00px;top:1394.00px;" width="32" height="32" viewBox="0 0 24 24" fill="none" stroke="#111" stroke-width="2" stroke-linecap="round" stroke-linejoin="round"><polyline points="15 3 21 3 21 9"/><polyline points="9 21 3 21 3 15"/><line x1="21" x2="14" y1="3" y2="10"/><line x1="3" x2="10" y1="21" y2="14"/></svg>
<div style="position:absolute;left:740px;top:1530px;width:1530px;height:60px;background:#000;box-shadow:0 0 100px 0 rgba(0,0,0,.36);pointer-events:none;"></div>
<div style="position:absolute;left:261.6px;top:258.3px;width:1773.4px;height:279.7px;box-sizing:border-box;border:3.4px solid #ff2600;filter:drop-shadow(0 3px 2.5px rgba(0,0,0,.34));"></div>
<div style="position:absolute;left:2503px;top:290.5px;width:62.59999999999991px;height:67.10000000000002px;box-sizing:border-box;border:3.4px solid #ff2600;filter:drop-shadow(0 3px 2.5px rgba(0,0,0,.34));"></div>
<div style="position:absolute;left:2053.8px;top:505.5px;width:764.1999999999998px;height:224.0px;box-sizing:border-box;border:3.4px solid #ff2600;filter:drop-shadow(0 3px 2.5px rgba(0,0,0,.34));"></div>
<div style="position:absolute;left:2058px;top:891px;width:761.5px;height:440.79999999999995px;box-sizing:border-box;border:3.4px solid #ff2600;filter:drop-shadow(0 3px 2.5px rgba(0,0,0,.34));"></div></div></body></html>
